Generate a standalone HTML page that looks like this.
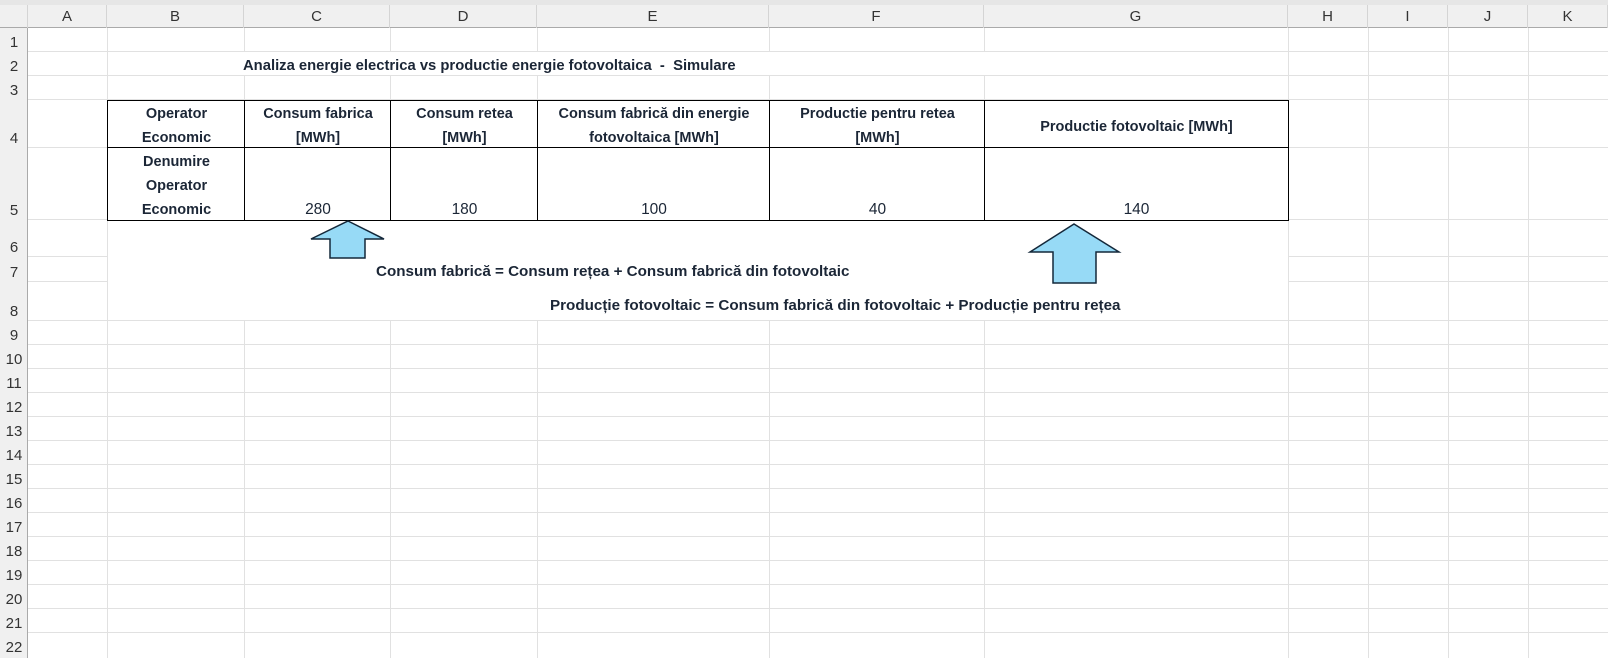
<!DOCTYPE html>
<html><head><meta charset="utf-8"><style>
body{margin:0;width:1608px;height:653px;overflow:hidden;background:#fff;position:relative;font-family:"Liberation Sans",sans-serif;color:#1b2636}
div{position:absolute;box-sizing:border-box}
.v{top:28px;height:630px;width:1px;background:#e1e1e1}
.h{left:28px;width:1580px;height:1px;background:#e1e1e1}
.tv{top:100px;height:121px;width:1px;background:#000}
.ch{top:5px;height:23px;font-size:15px;color:#333;text-align:center;line-height:23px;border-right:1px solid #d4d4d4}
.rn{left:0;width:28px;font-size:15px;color:#333;text-align:center;display:flex;align-items:flex-end;justify-content:center;padding-bottom:1px}
.c{display:flex;align-items:flex-end;justify-content:center;text-align:center;font-size:14.5px;font-weight:bold;line-height:24px;margin-top:2px;white-space:nowrap}
.n{font-weight:normal;font-size:15.5px}
</style></head><body>
<div style="left:0;top:0;width:1608px;height:5px;background:#e6e6e6"></div>
<div style="left:0;top:5px;width:1608px;height:23px;background:#f0f0f0;border-bottom:1px solid #aaa"></div>
<div style="left:0;top:28px;width:28px;height:630px;background:#f0f0f0;border-right:1px solid #aaa"></div>
<div class="ch" style="left:0;width:28px"></div>
<div class="ch" style="left:28px;width:79px">A</div>
<div class="ch" style="left:107px;width:137px">B</div>
<div class="ch" style="left:244px;width:146px">C</div>
<div class="ch" style="left:390px;width:147px">D</div>
<div class="ch" style="left:537px;width:232px">E</div>
<div class="ch" style="left:769px;width:215px">F</div>
<div class="ch" style="left:984px;width:304px">G</div>
<div class="ch" style="left:1288px;width:80px">H</div>
<div class="ch" style="left:1368px;width:80px">I</div>
<div class="ch" style="left:1448px;width:80px">J</div>
<div class="ch" style="left:1528px;width:80px">K</div>

<div class="v" style="left:107px"></div><div class="v" style="left:244px"></div><div class="v" style="left:390px"></div><div class="v" style="left:537px"></div><div class="v" style="left:769px"></div><div class="v" style="left:984px"></div><div class="v" style="left:1288px"></div><div class="v" style="left:1368px"></div><div class="v" style="left:1448px"></div><div class="v" style="left:1528px"></div>

<div class="h" style="top:51px"></div><div class="h" style="top:75px"></div><div class="h" style="top:99px"></div><div class="h" style="top:147px"></div><div class="h" style="top:219px"></div><div class="h" style="top:256px"></div><div class="h" style="top:281px"></div><div class="h" style="top:320px"></div><div class="h" style="top:344px"></div><div class="h" style="top:368px"></div><div class="h" style="top:392px"></div><div class="h" style="top:416px"></div><div class="h" style="top:440px"></div><div class="h" style="top:464px"></div><div class="h" style="top:488px"></div><div class="h" style="top:512px"></div><div class="h" style="top:536px"></div><div class="h" style="top:560px"></div><div class="h" style="top:584px"></div><div class="h" style="top:608px"></div><div class="h" style="top:632px"></div>

<div class="rn" style="top:28px;height:24px">1</div>
<div class="rn" style="top:52px;height:24px">2</div>
<div class="rn" style="top:76px;height:24px">3</div>
<div class="rn" style="top:100px;height:48px">4</div>
<div class="rn" style="top:148px;height:72px">5</div>
<div class="rn" style="top:220px;height:37px">6</div>
<div class="rn" style="top:257px;height:25px">7</div>
<div class="rn" style="top:282px;height:39px">8</div>
<div class="rn" style="top:321px;height:24px">9</div>
<div class="rn" style="top:345px;height:24px">10</div>
<div class="rn" style="top:369px;height:24px">11</div>
<div class="rn" style="top:393px;height:24px">12</div>
<div class="rn" style="top:417px;height:24px">13</div>
<div class="rn" style="top:441px;height:24px">14</div>
<div class="rn" style="top:465px;height:24px">15</div>
<div class="rn" style="top:489px;height:24px">16</div>
<div class="rn" style="top:513px;height:24px">17</div>
<div class="rn" style="top:537px;height:24px">18</div>
<div class="rn" style="top:561px;height:24px">19</div>
<div class="rn" style="top:585px;height:24px">20</div>
<div class="rn" style="top:609px;height:24px">21</div>
<div class="rn" style="top:633px;height:24px">22</div>

<div style="left:108px;top:52px;width:1179px;height:23px;background:#fff"></div>
<div style="left:108px;top:220px;width:1180px;height:100px;background:#fff"></div>

<div style="left:243px;top:54px;height:24px;line-height:24px;font-size:14.8px;font-weight:bold;white-space:pre">Analiza energie electrica vs productie energie fotovoltaica  -  Simulare</div>

<div style="left:107px;top:100px;width:1182px;height:121px;border:1px solid #000;background:#fff"></div>
<div style="left:107px;top:147px;width:1182px;height:1px;background:#000"></div>
<div class="tv" style="left:244px"></div><div class="tv" style="left:390px"></div><div class="tv" style="left:537px"></div><div class="tv" style="left:769px"></div><div class="tv" style="left:984px"></div>
<div class="c" style="left:108px;top:101px;width:137px;height:47px">Operator<br>Economic</div>
<div class="c" style="left:245px;top:101px;width:146px;height:47px">Consum fabrica<br>[MWh]</div>
<div class="c" style="left:391px;top:101px;width:147px;height:47px">Consum retea<br>[MWh]</div>
<div class="c" style="left:538px;top:101px;width:232px;height:47px">Consum fabrică din energie<br>fotovoltaica [MWh]</div>
<div class="c" style="left:770px;top:101px;width:215px;height:47px">Productie pentru retea<br>[MWh]</div>
<div class="c" style="left:985px;top:101px;width:303px;height:47px;align-items:center">Productie fotovoltaic [MWh]</div>
<div class="c" style="left:108px;top:148px;width:137px;height:72px">Denumire<br>Operator<br>Economic</div>
<div class="c n" style="left:245px;top:148px;width:146px;height:72px">280</div>
<div class="c n" style="left:391px;top:148px;width:147px;height:72px">180</div>
<div class="c n" style="left:538px;top:148px;width:232px;height:72px">100</div>
<div class="c n" style="left:770px;top:148px;width:215px;height:72px">40</div>
<div class="c n" style="left:985px;top:148px;width:303px;height:72px">140</div>

<svg style="position:absolute;left:0;top:0" width="1608" height="653">
<path d="M348 221 L384 239 L365 239 L365 258 L330 258 L330 239 L311 239 Z" fill="#97daf6" stroke="#14283a" stroke-width="1.5"/>
<path d="M1074 224 L1119 252 L1096 252 L1096 283 L1053 283 L1053 252 L1030 252 Z" fill="#97daf6" stroke="#14283a" stroke-width="1.5"/>
</svg>

<div style="left:376px;top:263px;font-size:15.2px;font-weight:bold;white-space:nowrap">Consum fabrică = Consum rețea + Consum fabrică din fotovoltaic</div>
<div style="left:550px;top:297px;font-size:15.2px;font-weight:bold;white-space:nowrap">Producție fotovoltaic = Consum fabrică din fotovoltaic + Producție pentru rețea</div>
</body></html>
